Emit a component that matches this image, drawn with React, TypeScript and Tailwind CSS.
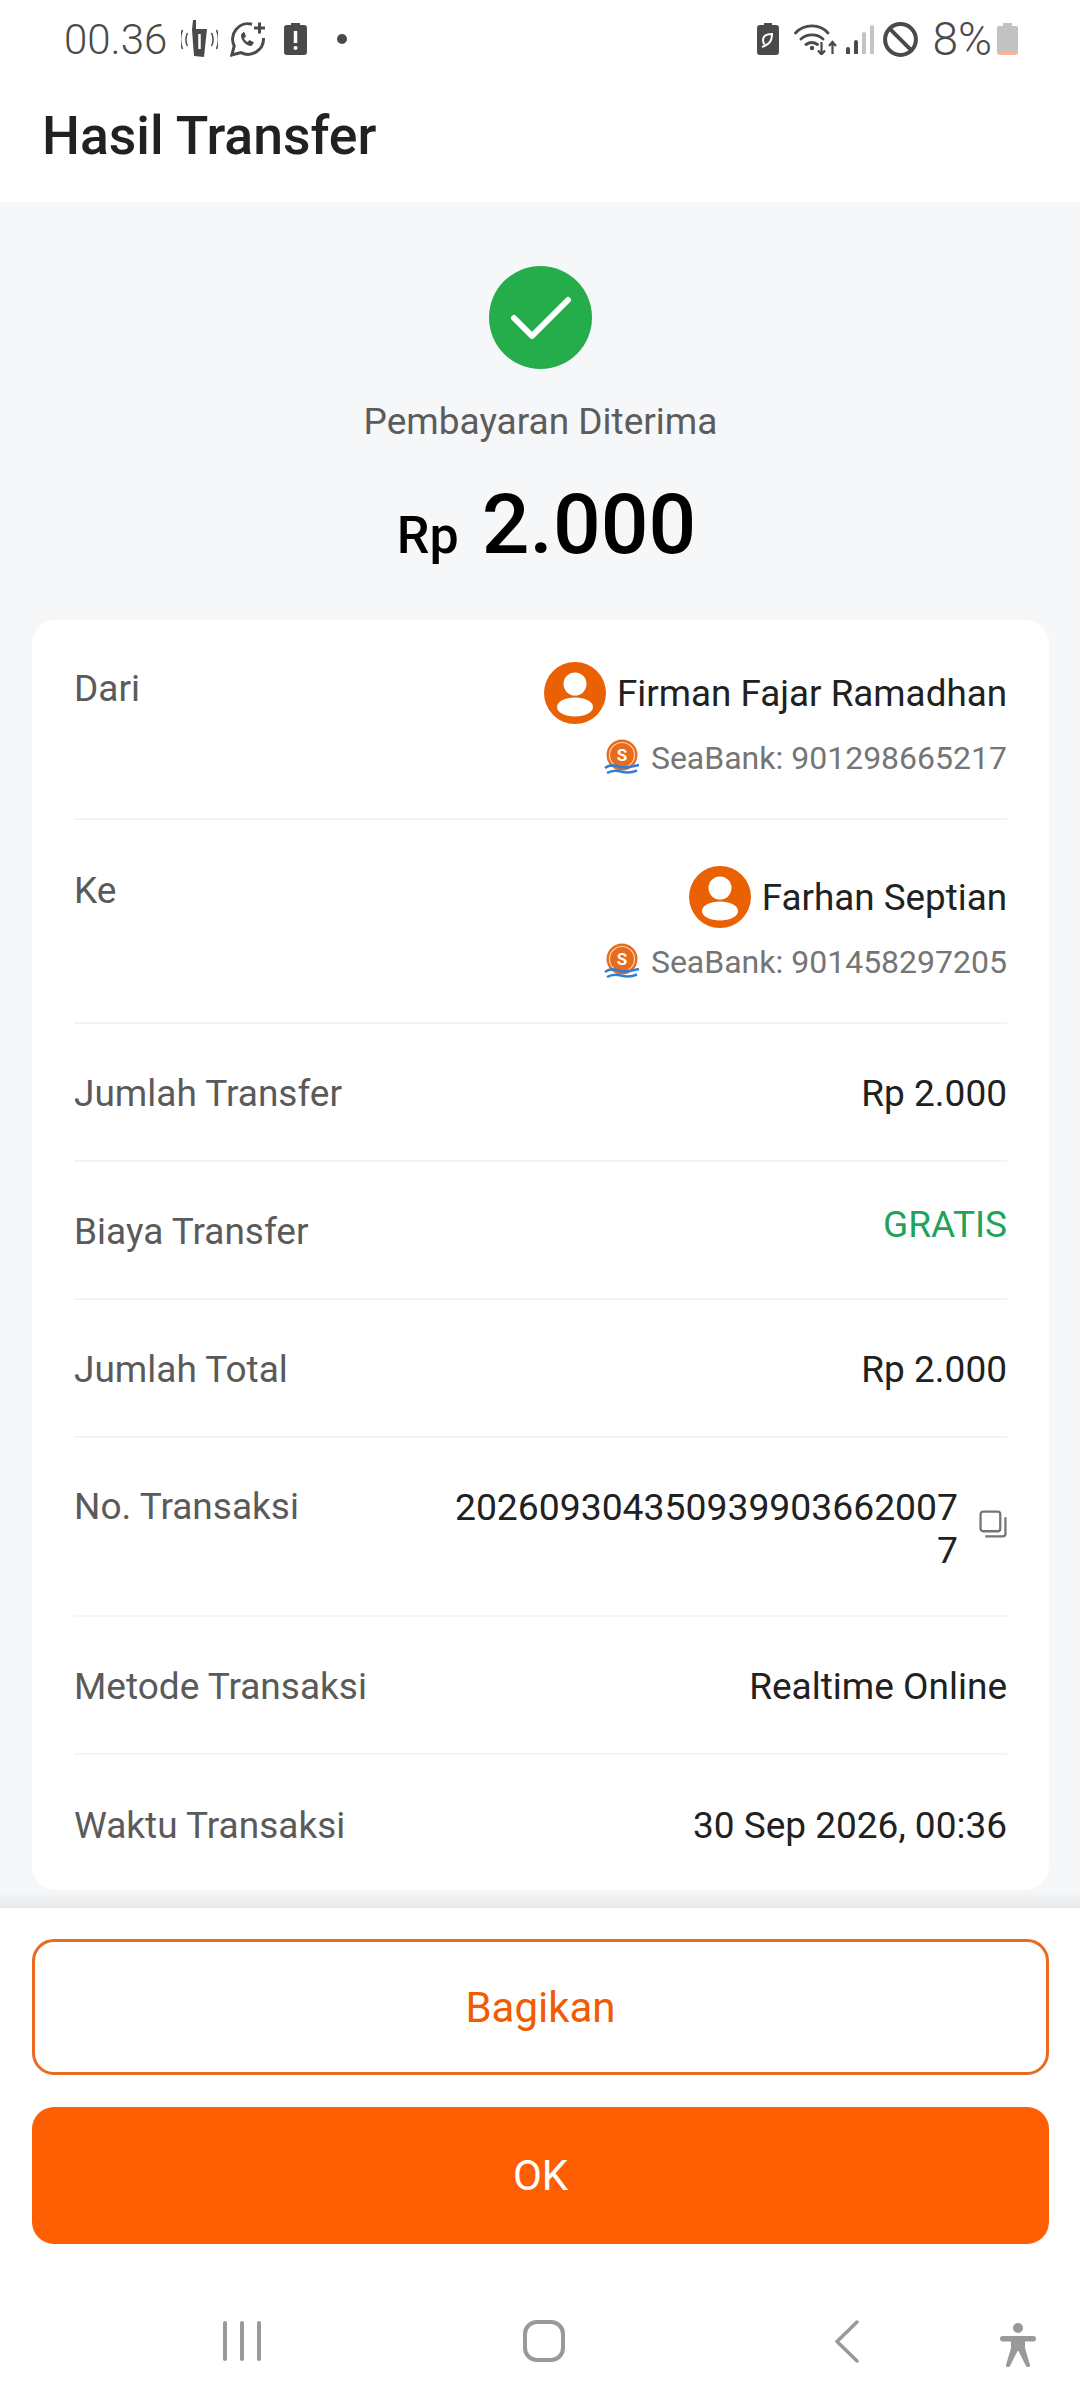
import { Ban } from "lucide-react";

function Avatar() {
  return (
    <svg width="62" height="62" viewBox="0 0 62 62" className="shrink-0">
      <circle cx="31" cy="31" r="31" fill="#e96103" />
      <circle cx="31" cy="22" r="11.5" fill="#fff" />
      <ellipse cx="31" cy="45" rx="18" ry="9.5" fill="#fff" />
    </svg>
  );
}

function SeaBankLogo() {
  return (
    <svg width="36" height="38" viewBox="0 0 36 38" className="shrink-0">
      <circle cx="18" cy="16" r="15.5" fill="#e96c1c" />
      <circle cx="18" cy="16" r="12.5" fill="none" stroke="#f8d9c0" strokeWidth="1.2" />
      <text x="18" y="22" textAnchor="middle" fontSize="17" fontWeight="700" fill="#fff" fontFamily="Roboto, sans-serif">S</text>
      <path d="M1 29c5-4 9-3 13-1.500s8 1.500 21-1.500" fill="none" stroke="#2f7fd6" strokeWidth="2.500" />
      <path d="M3 34c5-3 9-3 14-1.500s10 1.500 16-1" fill="none" stroke="#2f7fd6" strokeWidth="2.500" />
    </svg>
  );
}

function Party({ name, account }: { name: string; account: string }) {
  return (
    <div className="flex flex-col items-end">
      <div className="flex items-center gap-[11px] h-[62px]">
        <Avatar />
        <span className="text-[36.8px] text-[#212121] pt-[2px]">{name}</span>
      </div>
      <div className="flex items-center gap-[11px] mt-[13px] h-[42px]">
        <SeaBankLogo />
        <span className="text-[32px] text-[#757575]">{account}</span>
      </div>
    </div>
  );
}

function Row({ label, value, green, last }: { label: string; value: string; green?: boolean; last?: boolean }) {
  return (
    <div className={`flex justify-between items-center h-[138px] pt-[3px] ${last ? "" : "border-b-2 border-[#f3f4f5]"}`}>
      <span className="text-[37px] text-[#5a5a5a]">{label}</span>
      <span className={green ? "text-[37px] text-[#1fa35c] -mt-[14px]" : "text-[37px] text-[#212121]"}>{value}</span>
    </div>
  );
}

function StatusBar() {
  return (
    <div className="h-[78px] flex items-center justify-between pl-[64px] pr-[62px] text-[#4a4a4a]">
      <div className="flex items-center">
        <span className="text-[42px] font-light w-[117px]">00.36</span>
        {/* vibrate */}
        <svg width="37" height="38" viewBox="0 0 37 38" fill="none" stroke="#4a4a4a">
          <path d="M12 0h3v9h11l-3 28-10-1-2-26z" fill="#4a4a4a" stroke="none" />
          <path d="M18.500 14v15" stroke="#fff" strokeWidth="2.500" />
          <path d="M6.500 13c-2 4-2 9 0 13M1.500 10c-2.500 6-2.500 13 0 19M30.500 13c2 4 2 9 0 13M35.500 10c2.500 6 2.500 13 0 19" strokeWidth="1.500" />
        </svg>
        {/* whatsapp + */}
        <svg width="37" height="36" viewBox="0 0 37 36" fill="none" stroke="#4a4a4a" strokeWidth="3" className="ml-[12px]">
          <path d="M22 3.200A15.500 15.500 0 0 0 4.200 25L1.800 34l9.200-2.400A15.500 15.500 0 0 0 33.500 17" />
          <path d="M11 13.500c0 6.500 4.500 11 10.500 11.500l2.500-3.500-4.500-2.500-2 2c-1.500-.7-2.700-2-3.500-3.800l2-1.700-2-5z" fill="#4a4a4a" stroke="none" />
          <path d="M29.500 1.500v11M24 7h11" strokeWidth="3" />
        </svg>
        {/* battery alert */}
        <svg width="23" height="32" viewBox="0 0 23 32" className="ml-[17px]">
          <path d="M7 0h9v2h4a3 3 0 0 1 3 3v24a3 3 0 0 1-3 3H3a3 3 0 0 1-3-3V5a3 3 0 0 1 3-3h4z" fill="#4a4a4a" />
          <path d="M11.500 8v12" stroke="#fff" strokeWidth="3.500" />
          <circle cx="11.500" cy="25" r="2" fill="#fff" />
        </svg>
        <span className="ml-[30px] w-[10px] h-[10px] rounded-full bg-[#4a4a4a]" />
      </div>
      <div className="flex items-center">
        {/* battery saver */}
        <svg width="22" height="32" viewBox="0 0 22 32">
          <path d="M7 0h8v2h4a3 3 0 0 1 3 3v24a3 3 0 0 1-3 3H3a3 3 0 0 1-3-3V5a3 3 0 0 1 3-3h4z" fill="#4a4a4a" />
          <path d="M5 24c3-1 5-2 7-4 2-2 3-5 3-9-5 0-9 1-9 6 0 2 .5 3 1.500 4.500" fill="none" stroke="#fff" strokeWidth="2" />
        </svg>
        {/* wifi */}
        <svg width="43" height="31" viewBox="0 0 43 31" className="ml-[15px]" fill="none" stroke="#4a4a4a" strokeWidth="2.800" strokeLinecap="round">
          <path d="M1.500 9C10-.5 26-.5 34 9M7 15c6-5.500 16-5.500 22 0M12 20.500c3.500-2.500 8-2.500 11.500 0" />
          <circle cx="18" cy="24" r="2.200" fill="#4a4a4a" stroke="none" />
          <path d="M27.500 18v12M24 26.500l3.500 4 3.500-4M38.500 30V18.500M35 22l3.500-4 3.500 4" strokeWidth="2.200" strokeLinecap="butt" />
        </svg>
        {/* signal */}
        <div className="flex items-end ml-[9px] gap-[4px] h-[29px]">
          <span className="w-[4px] h-[7px] rounded-t-[2px] bg-[#4a4a4a]" />
          <span className="w-[4px] h-[14px] rounded-t-[2px] bg-[#4a4a4a]" />
          <span className="w-[4px] h-[22px] rounded-t-[2px] bg-[#c4c4c4]" />
          <span className="w-[4px] h-[29px] rounded-t-[2px] bg-[#c4c4c4]" />
        </div>
        <Ban size={37} strokeWidth={2.6} color="#4a4a4a" className="ml-[8px]" />
        <span className="text-[46px] font-light ml-[13px] leading-none">8%</span>
        <svg width="21" height="32" viewBox="0 0 21 32" className="ml-[5px]">
          <path d="M6 0h9v3h4a2 2 0 0 1 2 2v24H0V5a2 2 0 0 1 2-2h4z" fill="#c2c2c2" />
          <path d="M0 29h21v0a3 3 0 0 1-3 3H3a3 3 0 0 1-3-3z" fill="#f3b49b" />
        </svg>
      </div>
    </div>
  );
}

export default function App() {
  return (
    <div className="w-[1080px] h-[2400px] flex flex-col bg-white overflow-hidden font-['Roboto',sans-serif]">
      <StatusBar />
      <div className="h-[124px] flex items-center pl-[42px] pb-[8px]">
        <h1 className="text-[53.5px] font-medium text-[#212121]">Hasil Transfer</h1>
      </div>

      <div className="h-[1705px] pl-[32px] pr-[31px] flex flex-col bg-gradient-to-b from-[#f6f7f9] from-[99%] to-[#e9eaec]">
        <div className="flex flex-col items-center">
          <div className="mt-[64px] w-[103px] h-[103px] rounded-full bg-[#24ad4a] flex items-center justify-center">
            <svg width="62" height="46" viewBox="0 0 62 46" fill="none" stroke="#fff" strokeWidth="6" strokeLinecap="round" strokeLinejoin="round">
              <path d="M4 23l18 18L58 5" />
            </svg>
          </div>
          <p className="mt-[32px] text-[37px] leading-[42px] text-[#5c5c5c]">Pembayaran Diterima</p>
          <p className="mt-[36px] pl-[12px] flex items-baseline text-black font-medium leading-[92px]">
            <span className="text-[52px]">Rp</span>
            <span className="text-[84px] ml-[23px]">2.000</span>
          </p>
        </div>

        <div className="mt-[38px] h-[1270px] bg-white rounded-[24px] px-[42px]">
          <div className="h-[200px] flex justify-between border-b-2 border-[#f3f4f5] pt-[42px]">
            <span className="text-[37px] leading-[54px] text-[#5a5a5a]">Dari</span>
            <Party name="Firman Fajar Ramadhan" account="SeaBank: 901298665217" />
          </div>
          <div className="h-[204px] flex justify-between border-b-2 border-[#f3f4f5] pt-[46px]">
            <span className="text-[37px] leading-[54px] text-[#5a5a5a] -mt-[2px]">Ke</span>
            <Party name="Farhan Septian" account="SeaBank: 901458297205" />
          </div>
          <Row label="Jumlah Transfer" value="Rp 2.000" />
          <Row label="Biaya Transfer" value="GRATIS" green />
          <Row label="Jumlah Total" value="Rp 2.000" />
          <div className="h-[179px] flex justify-between border-b-2 border-[#f3f4f5] pt-[42px]">
            <span className="text-[37px] leading-[54px] text-[#5a5a5a]">No. Transaksi</span>
            <div className="flex items-center self-start gap-[21px]">
              <span className="w-[506px] mt-[6px] text-right break-all text-[37.3px] leading-[43px] text-[#212121]">
                2026093043509399036620077
              </span>
              <svg width="28" height="28" viewBox="0 0 27 27" fill="none" stroke="#757575" strokeWidth="2.200" className="-mt-[4px]">
                <rect x="1.500" y="1.500" width="19" height="19" rx="2.500" />
                <path d="M25.500 7v16a2.500 2.500 0 0 1-2.500 2.500H6" />
              </svg>
            </div>
          </div>
          <Row label="Metode Transaksi" value="Realtime Online" />
          <Row label="Waktu Transaksi" value="30 Sep 2026, 00:36" last />
        </div>
      </div>

      <div className="border-t border-[#e4e5e7] flex flex-col pl-[32px] pr-[31px] pt-[31px] gap-[32px]">
        <button className="h-[136px] rounded-[22px] border-[3px] border-[#ea6a1f] text-[42px] text-[#f15b02]">Bagikan</button>
        <button className="h-[137px] rounded-[22px] bg-[#ff5f03] text-[42px] text-white">OK</button>
      </div>

      <div className="flex-1 relative">
        <div className="absolute left-[223px] top-[77px] flex gap-[13px]">
          <span className="w-[4px] h-[40px] bg-[#999] rounded-full" />
          <span className="w-[4px] h-[40px] bg-[#999] rounded-full" />
          <span className="w-[4px] h-[40px] bg-[#999] rounded-full" />
        </div>
        <span className="absolute left-[523px] top-[76px] w-[42px] h-[42px] rounded-[14px] border-[4px] border-[#999]" />
        <svg width="24" height="43" viewBox="0 0 24 43" className="absolute left-[835px] top-[76px]" fill="none" stroke="#999" strokeWidth="3.500" strokeLinecap="round" strokeLinejoin="round">
          <path d="M22 2L2 21.500 22 41" />
        </svg>
        <svg width="36" height="44" viewBox="0 0 36 44" className="absolute left-[1000px] top-[79px]" fill="#999">
          <circle cx="18" cy="5" r="5" />
          <rect x="0" y="13" width="36" height="5.500" rx="2.750" />
          <path d="M11 15h14v10l5 17c.5 2-3 3-4 1l-7.500-15h-1L10 43c-1 2-4.500 1-4-1l5-17z" />
        </svg>
      </div>
    </div>
  );
}
